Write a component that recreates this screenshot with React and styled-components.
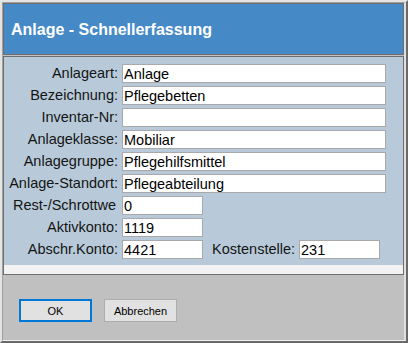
import React from "react";
import styled, { createGlobalStyle } from "styled-components";

const GlobalStyle = createGlobalStyle`
  html, body {
    margin: 0;
    padding: 0;
    background: #c0c0c0;
  }
  body {
    font-family: "Liberation Sans", Arial, sans-serif;
  }
`;

const fields = [
  { label: "Anlageart:", value: "Anlage" },
  { label: "Bezeichnung:", value: "Pflegebetten" },
  { label: "Inventar-Nr:", value: "" },
  { label: "Anlageklasse:", value: "Mobiliar" },
  { label: "Anlagegruppe:", value: "Pflegehilfsmittel" },
  { label: "Anlage-Standort:", value: "Pflegeabteilung" },
];

const App = () => {
  return (
    <Window>
      <GlobalStyle />
      <Frame>
        <Header>Anlage - Schnellerfassung</Header>
        <Panel>
          <Form>
            {fields.map((f) => (
              <React.Fragment key={f.label}>
                <Label>{f.label}</Label>
                <Input defaultValue={f.value} />
              </React.Fragment>
            ))}
            <Label $cut>Rest-/Schrottwe</Label>
            <Input $small defaultValue="0" />
            <Label>Aktivkonto:</Label>
            <Input $small defaultValue="1119" />
            <Label>Abschr.Konto:</Label>
            <Pair>
              <Input $small defaultValue="4421" />
              <SideLabel>Kostenstelle:</SideLabel>
              <Input $small defaultValue="231" />
            </Pair>
          </Form>
          <Strip />
        </Panel>
        <Footer>
          <Button $focus>OK</Button>
          <Button>Abbrechen</Button>
        </Footer>
      </Frame>
    </Window>
  );
};

const Window = styled.div`
  width: 408px;
  height: 343px;
  box-sizing: border-box;
  border-style: solid;
  border-width: 2px;
  border-color: #e4e4e4 #6a6a6a #6a6a6a #e4e4e4;
  background: #c0c0c0;
`;

const Frame = styled.div`
  height: 100%;
  box-sizing: border-box;
  border-style: solid;
  border-width: 1px 2px 1px 1px;
  border-color: #a0a0a0 #e0e0e0 #f0f0f0 #a0a0a0;
  display: flex;
  flex-direction: column;
`;

const Header = styled.div`
  height: 52px;
  box-sizing: border-box;
  border: 1px solid #6e6e6e;
  background: #4689c7;
  color: #ffffff;
  font-weight: bold;
  font-size: 16px;
  display: flex;
  align-items: center;
  padding-left: 7px;
  padding-top: 1px;
`;

const Panel = styled.div`
  margin-top: 1px;
  border: 1px solid #6e6e6e;
  background: #b8cad9;
`;

const Form = styled.div`
  display: grid;
  grid-template-columns: 110px 1fr;
  column-gap: 4px;
  row-gap: 3px;
  padding: 7px 0 6px 4px;
  font-size: 14.5px;
`;

const Label = styled.div`
  height: 19px;
  line-height: 19px;
  text-align: ${(p) => (p.$cut ? "left" : "right")};
  padding-left: ${(p) => (p.$cut ? "5px" : "0")};
  white-space: nowrap;
  color: #141414;
`;

const SideLabel = styled(Label)`
  margin-left: 9px;
  margin-right: 4px;
`;

const Input = styled.input`
  width: ${(p) => (p.$small ? "81px" : "264px")};
  height: 19px;
  box-sizing: border-box;
  border: 1px solid #a9a9a9;
  background: #ffffff;
  padding: 0 1px;
  margin: 0;
  font-family: "Liberation Sans", Arial, sans-serif;
  font-size: 14.5px;
  color: #000000;
  outline: none;
`;

const Pair = styled.div`
  display: flex;
  align-items: center;
`;

const Strip = styled.div`
  height: 9px;
  background: #f2f2f2;
`;

const Footer = styled.div`
  flex: 1;
  display: flex;
  align-items: flex-start;
  gap: 12px;
  padding: 24px 0 0 16px;
`;

const Button = styled.button`
  width: 73px;
  height: 23px;
  box-sizing: border-box;
  margin: 0;
  padding: 0;
  background: #e1e1e1;
  border: ${(p) => (p.$focus ? "2px solid #0078d7" : "1px solid #adadad")};
  font-family: "Liberation Sans", Arial, sans-serif;
  font-size: 11px;
  color: #000000;
`;

export default App;
